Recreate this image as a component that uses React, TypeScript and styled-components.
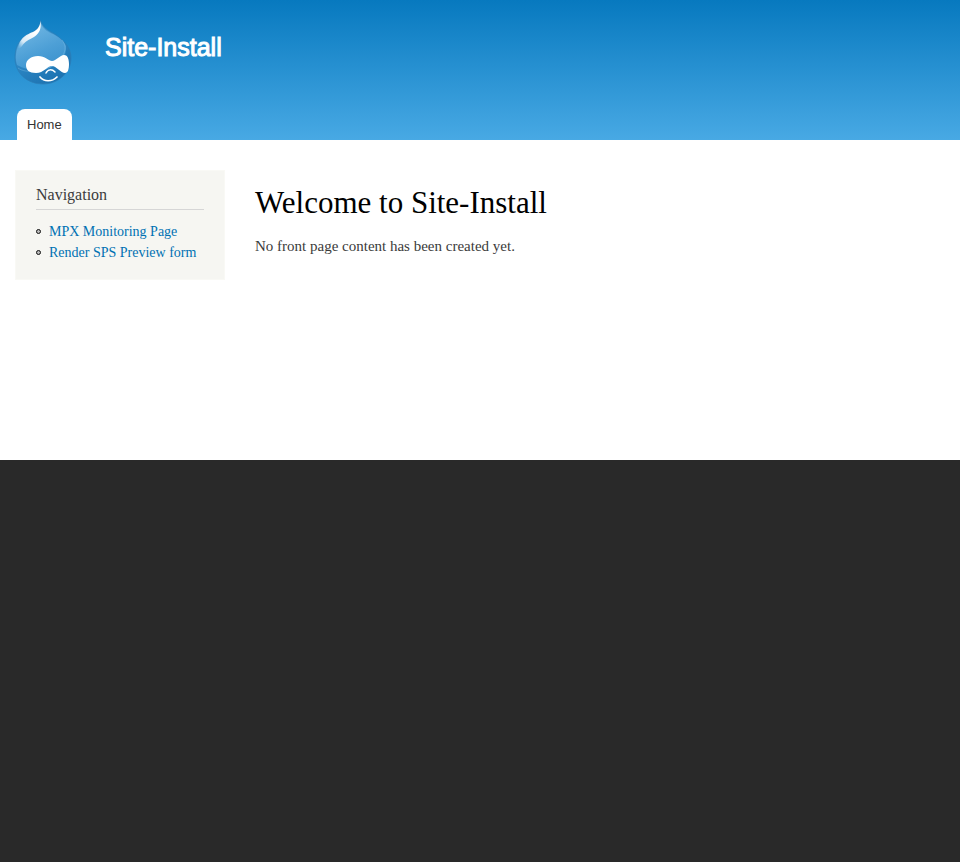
import React from 'react';
import styled, { createGlobalStyle } from 'styled-components';

const serif = '"Liberation Serif", serif';
const sans = '"Liberation Sans", sans-serif';

const GlobalStyle = createGlobalStyle`
  *, *::before, *::after { box-sizing: border-box; }
  body {
    margin: 0;
    background: #292929;
    color: #3b3b3b;
    font-family: ${serif};
  }
`;

const Header = styled.header`
  display: flex;
  flex-direction: column;
  justify-content: space-between;
  min-height: 140px;
  padding: 20px 14px 0;
  background: linear-gradient(#0779bf, #48a9e4);
`;

const Branding = styled.div`
  display: flex;
  align-items: flex-start;
  gap: 33px;
`;

const HomeLink = styled.a`
  display: block;
  color: #fff;
  text-decoration: none;
`;

const Logo = styled.svg`
  display: block;
  width: 58px;
  height: 65px;
`;

const SiteName = styled.strong`
  display: block;
  padding-top: 12px;
  font: 400 25px/30px ${sans};
  -webkit-text-stroke: 1px #fff;
`;

const Tabs = styled.nav`
  display: flex;
  padding: 0 3px;
`;

const Tab = styled.a`
  padding: 0 10px;
  border-radius: 8px 8px 0 0;
  background: #fff;
  color: #333;
  font: 13px/31px ${sans};
  text-decoration: none;
`;

const Main = styled.div`
  display: grid;
  grid-template-columns: 210px minmax(0, 1fr);
  align-items: start;
  gap: 30px;
  min-height: 320px;
  padding: 30px 15px;
  background: #fff;
`;

const Sidebar = styled.aside`
  padding: 14px 20px 16px;
  border: 1px solid #f9f9f5;
  background: #f6f6f2;
`;

const BlockTitle = styled.h2`
  margin: 0 0 11px;
  padding-bottom: 5px;
  border-bottom: 1px solid #d6d6d6;
  font-size: 16px;
  font-weight: 400;
  line-height: 19px;
`;

const Menu = styled.ul`
  margin: 0;
  padding: 0;
  list-style: none;
`;

const MenuItem = styled.li`
  display: flex;
  align-items: center;
  gap: 8px;
  font-size: 14px;
  line-height: 21px;
  white-space: nowrap;

  &::before {
    content: '';
    width: 5px;
    height: 5px;
    border: 1px solid #111;
    border-radius: 50%;
    background: #bbb;
  }
`;

const MenuLink = styled.a`
  color: #0071b3;
  text-decoration: none;
`;

const Content = styled.main`
  padding-top: 15px;
`;

const PageTitle = styled.h1`
  margin: 0 0 15px;
  color: #000;
  font-size: 31px;
  font-weight: 400;
  line-height: 36px;
`;

const Message = styled.p`
  margin: 0;
  font-size: 15px;
  line-height: 21px;
`;

const menuLinks = ['MPX Monitoring Page', 'Render SPS Preview form'];

function DropletLogo() {
  return (
    <Logo viewBox="0 0 58 65" role="img" aria-label="Home">
      <defs>
        <linearGradient id="drop" x1="0.2" y1="0" x2="0.7" y2="1">
          <stop offset="0" stopColor="#5fadde" />
          <stop offset="0.5" stopColor="#2c86c4" />
          <stop offset="1" stopColor="#1c72b0" />
        </linearGradient>
        <linearGradient id="gloss" x1="0.2" y1="0" x2="0.6" y2="1">
          <stop offset="0" stopColor="#80c0e8" stopOpacity="0.65" />
          <stop offset="1" stopColor="#4ba2dc" stopOpacity="0.6" />
        </linearGradient>
        <linearGradient id="shine" x1="0.9" y1="0" x2="0.1" y2="1">
          <stop offset="0.35" stopColor="#fff" />
          <stop offset="0.8" stopColor="#fff" stopOpacity="0.75" />
          <stop offset="1" stopColor="#fff" stopOpacity="0.1" />
        </linearGradient>
      </defs>
      <path
        d="M26.5 0.5C28 6 32 9 37 12C41 14 44 16 47 19C53 24 57 30 57 38C57 53 44 64 29 64C13 64 1 53 1 38C1 30 3 23 9 18C14 13 26 12 26.5 0.5Z"
        fill="url(#drop)"
        stroke="#2b7cb6"
        strokeWidth="0.7"
      />
      <path
        d="M27 4C29 9 34 12 39 14C45 17 50 21 52 26C53 35 47 43 38 47C27 51 14 51 3 45C0 35 3 25 10 18C17 13 26 12 27 4Z"
        fill="url(#gloss)"
      />
      <path d="M48 20C51 24 52 28 50 33C47 43 36 49 23 51C14 52 8 51 4 48" fill="none" stroke="#8ac5e9" strokeWidth="0.6" opacity="0.6" />
      <path d="M26.5 1C27.5 8 26 13 20 17C15 20 11 21 8 26C6 29 3 29 5 24C7 18 13 14 19 12C23 10 26 7 26.5 1Z" fill="url(#shine)" />
      <path
        d="M12 45C12 40 17 36 24 36C31 36 35 41 38 41C42 41 46 35 50 35C54 35 55 40 55 44C55 49 54 53 51 53C47 53 42 46 38 46C33 46 30 53 22 53C15 53 12 50 12 45Z"
        fill="#fff"
      />
      <path d="M32 53C34 49 38 49 41 52" fill="none" stroke="#fff" strokeWidth="1.5" strokeLinecap="round" />
      <path d="M26 57C30 62 38 62 43 57" fill="none" stroke="#fff" strokeWidth="1.7" strokeLinecap="round" />
    </Logo>
  );
}

export default function App() {
  return (
    <>
      <GlobalStyle />
      <Header>
        <Branding>
          <HomeLink href="#">
            <DropletLogo />
          </HomeLink>
          <HomeLink href="#">
            <SiteName>Site-Install</SiteName>
          </HomeLink>
        </Branding>
        <Tabs aria-label="Main menu">
          <Tab href="#">Home</Tab>
        </Tabs>
      </Header>
      <Main>
        <Sidebar>
          <BlockTitle>Navigation</BlockTitle>
          <Menu>
            {menuLinks.map((label) => (
              <MenuItem key={label}>
                <MenuLink href="#">{label}</MenuLink>
              </MenuItem>
            ))}
          </Menu>
        </Sidebar>
        <Content>
          <PageTitle>Welcome to Site-Install</PageTitle>
          <Message>No front page content has been created yet.</Message>
        </Content>
      </Main>
    </>
  );
}
